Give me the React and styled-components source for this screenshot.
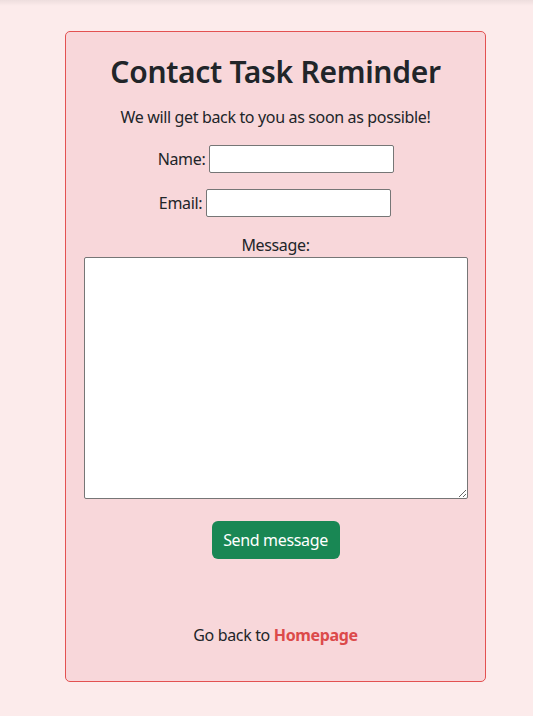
import React from 'react';
import styled, { createGlobalStyle } from 'styled-components';

const GlobalStyle = createGlobalStyle`
  html, body {
    margin: 0;
    padding: 0;
    background: #fcebeb;
    font-family: "Noto Sans", "Open Sans", sans-serif;
    color: #212529;
  }
`;

const TopShade = styled.div`
  height: 6px;
  background: linear-gradient(to bottom, rgba(0, 0, 0, 0.06), rgba(0, 0, 0, 0));
`;

const Page = styled.div`
  min-height: 716px;
  box-sizing: border-box;
  padding: 25px 47px 34px 65px;
`;

const Card = styled.div`
  box-sizing: border-box;
  width: 421px;
  height: 651px;
  background: #f8d7da;
  border: 1px solid #e35151;
  border-radius: 5px;
  padding: 0 18px;
  display: flex;
  flex-direction: column;
  align-items: center;
  letter-spacing: -0.35px;
`;

const Title = styled.h1`
  margin: 21px 0 0;
  font-size: 30px;
  font-weight: 600;
  line-height: 37px;
  color: #212529;
  letter-spacing: -0.3px;
`;

const Subtitle = styled.p`
  margin: 15px 0 0;
  font-size: 16px;
  line-height: 24px;
`;

const Form = styled.form`
  display: flex;
  flex-direction: column;
  align-items: center;
  width: 100%;
`;

const Row = styled.div`
  display: flex;
  align-items: center;
  gap: 4px;
  margin-top: ${p => p.$top}px;
  margin-left: ${p => p.$shift}px;
  font-size: 16px;
`;

const Input = styled.input`
  box-sizing: border-box;
  width: 185px;
  height: 28px;
  border: 1px solid #767676;
  border-radius: 2px;
  background: #fff;
  padding: 1px 2px;
  font-size: 13px;
`;

const MessageLabel = styled.label`
  display: block;
  margin-top: 17px;
  font-size: 16px;
  line-height: 23px;
`;

const TextArea = styled.textarea`
  box-sizing: border-box;
  width: 384px;
  height: 242px;
  border: 1px solid #767676;
  border-radius: 2px;
  background: #fff;
  display: block;
`;

const SendButton = styled.button`
  margin-top: 22px;
  width: 128px;
  height: 38px;
  border: none;
  border-radius: 6px;
  background: #198754;
  color: #fff;
  font-family: inherit;
  font-size: 16px;
  letter-spacing: -0.35px;
  cursor: pointer;
`;

const Footer = styled.p`
  margin: 64px 0 0;
  font-size: 16px;
  line-height: 24px;
`;

const HomeLink = styled.a`
  color: #dc4a4a;
  font-weight: 700;
  text-decoration: none;
`;

export default function App() {
  return (
    <>
      <GlobalStyle />
      <TopShade />
      <Page>
        <Card>
          <Title>Contact Task Reminder</Title>
          <Subtitle>We will get back to you as soon as possible!</Subtitle>
          <Form onSubmit={e => e.preventDefault()}>
            <Row $top={16} $shift={1}>
              <label htmlFor="name">Name:</label>
              <Input id="name" type="text" />
            </Row>
            <Row $top={16} $shift={-1}>
              <label htmlFor="email">Email:</label>
              <Input id="email" type="email" />
            </Row>
            <MessageLabel htmlFor="message">Message:</MessageLabel>
            <TextArea id="message" />
            <SendButton type="submit">Send message</SendButton>
          </Form>
          <Footer>
            Go back to <HomeLink href="#">Homepage</HomeLink>
          </Footer>
        </Card>
      </Page>
    </>
  );
}
